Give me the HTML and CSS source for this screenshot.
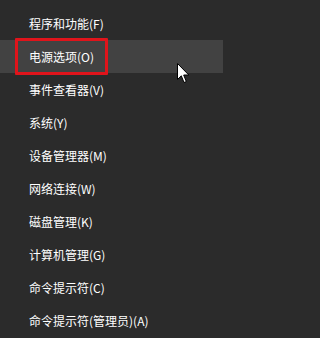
FILE: index.html
```html
<!DOCTYPE html>
<html lang="zh-CN">
<head>
<meta charset="utf-8">
<link rel="stylesheet" href="styles.css">
</head>
<body>
<ul class="menu">
  <li class="item">程序和功能(F)</li>
  <li class="item active">电源选项(O)<span class="mark"></span></li>
  <li class="item">事件查看器(V)</li>
  <li class="item">系统(Y)</li>
  <li class="item">设备管理器(M)</li>
  <li class="item">网络连接(W)</li>
  <li class="item">磁盘管理(K)</li>
  <li class="item">计算机管理(G)</li>
  <li class="item">命令提示符(C)</li>
  <li class="item">命令提示符(管理员)(A)</li>
</ul>
<svg class="cursor" width="13" height="21" viewBox="0 0 13 21">
  <path d="M0.5 0.5 L0.5 16.5 L4.3 12.8 L7 19.5 L9.3 18.6 L6.7 12 L11.8 12 Z" fill="#fff" stroke="#000" stroke-width="1"/>
</svg>
</body>
</html>
```
FILE: styles.css
```css
html {
  margin: 0;
  padding: 0;
  background: #2b2b2b;
}
body {
  margin: 0;
  padding: 0;
  width: 223px;
  height: 338px;
  overflow: hidden;
  position: relative;
  background: #2b2b2b;
  font-family: "Noto Sans CJK SC", "Noto Sans", sans-serif;
  font-size: 12px;
  color: #ffffff;
}
.menu {
  list-style: none;
  margin: 0;
  padding: 7px 0 0 0;
}
.item {
  position: relative;
  height: 33px;
  line-height: 33px;
  padding-left: 29px;
  white-space: nowrap;
}
.item.active {
  background: #424242;
}
.mark {
  position: absolute;
  left: 15px;
  top: -2px;
  width: 87px;
  height: 31px;
  border: 3px solid #e0141b;
  border-radius: 1px;
}
.cursor {
  position: absolute;
  left: 177px;
  top: 63px;
}
```
